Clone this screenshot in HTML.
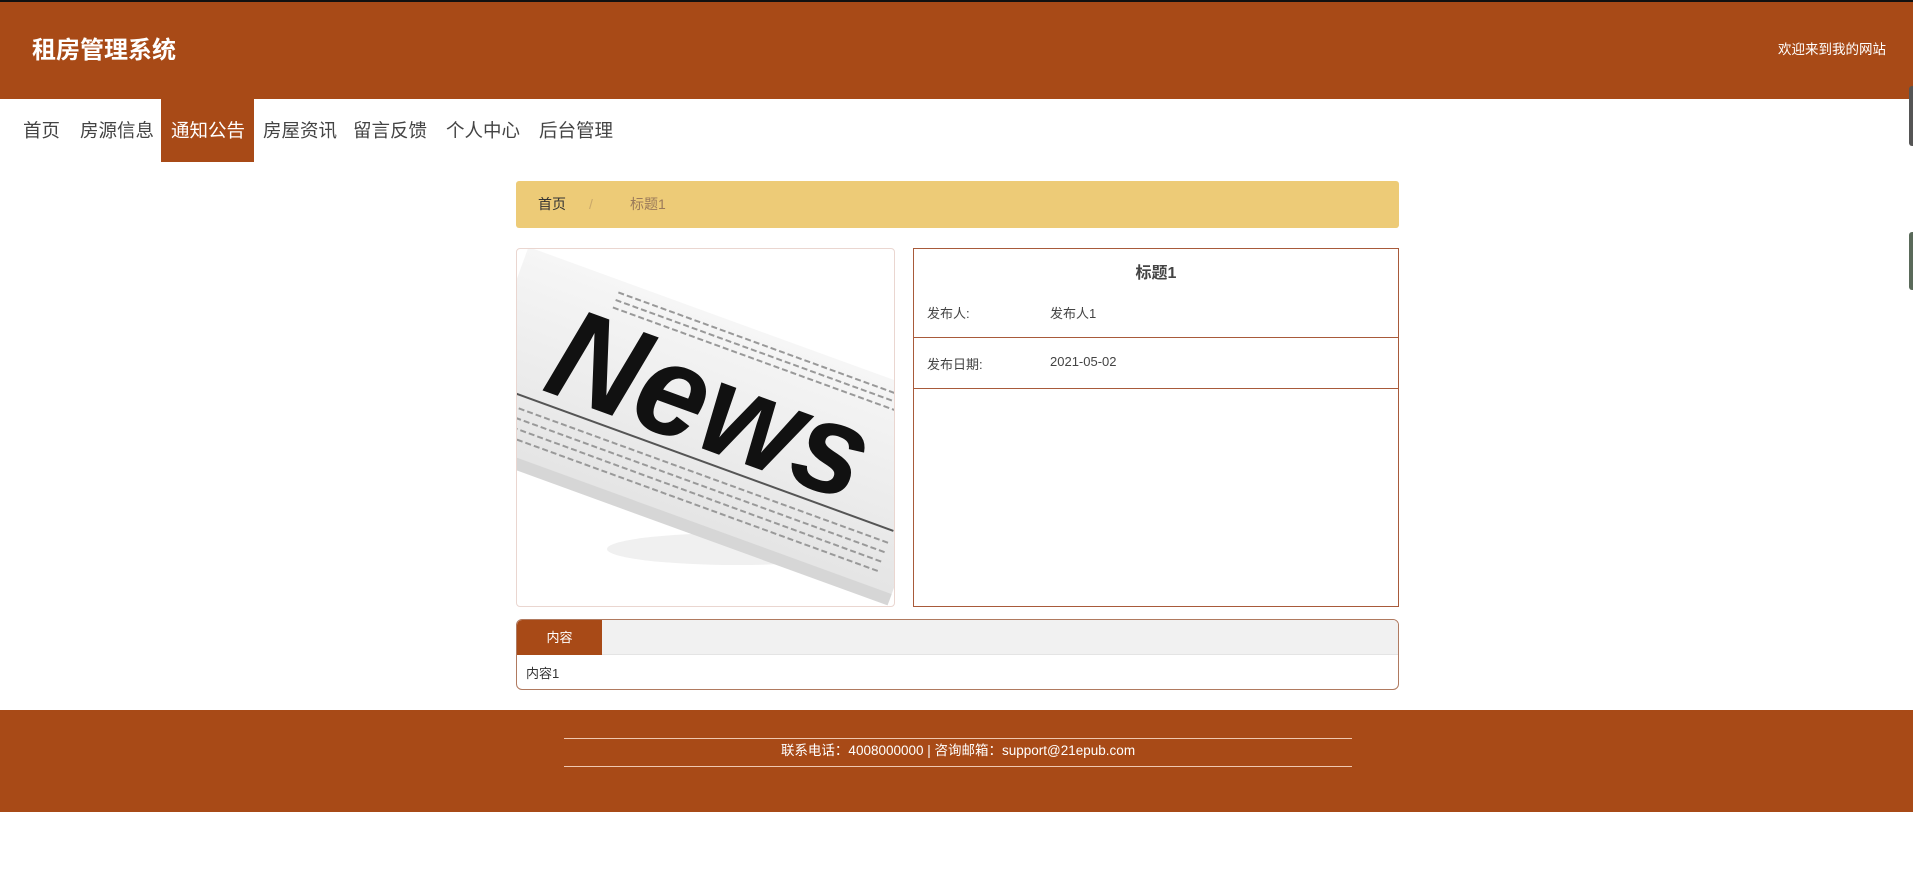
<!DOCTYPE html>
<html><head><meta charset="utf-8"><style>
*{margin:0;padding:0;box-sizing:border-box}
body{width:1913px;height:870px;background:#fff;font-family:"Liberation Sans","Noto Sans CJK SC",sans-serif;position:relative;overflow:hidden;color:#333}
.abs{position:absolute}
#top{left:0;top:0;width:1913px;height:2px;background:#111}
#hdr{left:0;top:2px;width:1913px;height:97px;background:#A84A17}
#title{left:32px;top:36px;color:#fff;font-size:24px;line-height:30px;font-weight:bold}
#wel{left:1778px;top:41px;color:#fff;font-size:13.5px;line-height:18px}
.nav{top:99px;height:63px;line-height:63px;font-size:18.5px;color:#444}
#act{left:161px;top:99px;width:93px;height:63px;background:#A84A17}
#bc{left:516px;top:181px;width:883px;height:47px;background:#EDCB77;border-radius:3px;font-size:14px;line-height:47px}
#img{left:516px;top:248px;width:379px;height:359px;border:1px solid #ead6d0;border-radius:4px;overflow:hidden}
#info{left:913px;top:248px;width:486px;height:359px;border:1px solid #A85A3A}
.row{position:absolute;left:0;width:484px;border-bottom:1px solid #A85A3A;font-size:13px;color:#444}
#cont{left:516px;top:619px;width:883px;height:71px;border:1px solid #B07A60;border-radius:6px;overflow:hidden}
#foot{left:0;top:710px;width:1913px;height:102px;background:#A84A17}
.fl{left:564px;width:788px;height:1px;background:#f0c8b0}
.tab{position:absolute;right:0;width:4px;background:#555;border-radius:3px 0 0 3px}
</style></head><body>
<div class="abs" id="top"></div>
<div class="abs" id="hdr"></div>
<div class="abs" id="title">租房管理系统</div>
<div class="abs" id="wel">欢迎来到我的网站</div>
<div class="tab" style="top:86px;height:60px"></div>
<div class="tab" style="top:232px;height:58px;background:#5a6a5a"></div>
<div class="abs" id="act"></div>
<div class="abs nav" style="left:23px">首页</div>
<div class="abs nav" style="left:80px">房源信息</div>
<div class="abs nav" style="left:171px;color:#fff">通知公告</div>
<div class="abs nav" style="left:263px">房屋资讯</div>
<div class="abs nav" style="left:353px">留言反馈</div>
<div class="abs nav" style="left:446px">个人中心</div>
<div class="abs nav" style="left:539px">后台管理</div>
<div class="abs" id="bc"><span style="position:absolute;left:22px;color:#333">首页</span><span style="position:absolute;left:73px;color:#c9a86a">/</span><span style="position:absolute;left:114px;color:#9a7a5a">标题1</span></div>
<div class="abs" id="img">
<svg width="379" height="359" viewBox="0 0 379 359">
<defs><linearGradient id="g" x1="0" y1="0" x2="0" y2="1"><stop offset="0" stop-color="#f6f6f6"/><stop offset="1" stop-color="#e4e4e4"/></linearGradient></defs>
<ellipse cx="220" cy="300" rx="130" ry="16" fill="#f0f0f0"/>
<g transform="rotate(20 190 180)">
<rect x="-40" y="70" width="460" height="210" fill="url(#g)"/>
<rect x="-40" y="272" width="460" height="12" fill="#d6d6d6"/>
<g stroke="#999" stroke-width="2" stroke-dasharray="6 3">
<line x1="60" y1="82" x2="400" y2="82"/><line x1="60" y1="90" x2="400" y2="90"/><line x1="60" y1="98" x2="400" y2="98"/>
<line x1="-30" y1="225" x2="400" y2="225"/><line x1="-30" y1="235" x2="400" y2="235"/><line x1="-30" y1="245" x2="400" y2="245"/><line x1="-30" y1="255" x2="400" y2="255"/>
</g>
<line x1="-30" y1="212" x2="400" y2="212" stroke="#555" stroke-width="2"/>
<text x="20" y="200" font-family="Liberation Sans,sans-serif" font-weight="bold" font-style="italic" font-size="130" fill="#111" textLength="330" lengthAdjust="spacingAndGlyphs">News</text>
</g>
</svg>
</div>
<div class="abs" id="info">
<div style="position:absolute;left:0;width:484px;top:10px;text-align:center;font-size:16px;font-weight:bold;color:#444">标题1</div>
<div class="row" style="top:0;height:89px"><span style="position:absolute;left:13px;top:54px">发布人:</span><span style="position:absolute;left:136px;top:54px">发布人1</span></div>
<div class="row" style="top:89px;height:51px"><span style="position:absolute;left:13px;top:16px">发布日期:</span><span style="position:absolute;left:136px;top:16px">2021-05-02</span></div>
</div>
<div class="abs" id="cont">
<div style="height:35px;background:#f1f1f1;border-bottom:1px solid #e4e4e4;position:relative"><div style="width:85px;height:35px;background:#A84A17;color:#fff;font-size:13px;line-height:35px;text-align:center">内容</div></div>
<div style="font-size:13px;padding:8px 9px;color:#333">内容1</div>
</div>
<div class="abs" id="foot"></div>
<div class="abs fl" style="top:738px"></div>
<div class="abs fl" style="top:766px"></div>
<div class="abs" style="left:564px;width:788px;top:742px;text-align:center;color:#fff;font-size:13.5px;line-height:18px">联系电话：4008000000 | 咨询邮箱：support@21epub.com</div>
</body></html>
